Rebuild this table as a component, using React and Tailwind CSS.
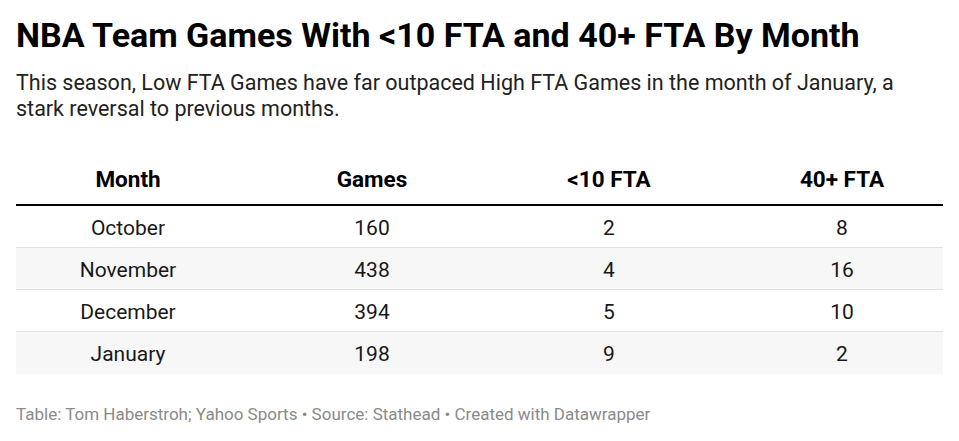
export default function App() {
  const rows = [
    ["October", "160", "2", "8"],
    ["November", "438", "4", "16"],
    ["December", "394", "5", "10"],
    ["January", "198", "9", "2"],
  ];
  const cols = "grid grid-cols-[224px_264px_210px_229px]";
  return (
    <div className="w-[959px] h-[441px] bg-white px-4 pt-4 text-[#181818]" style={{ fontFamily: "Roboto, 'Liberation Sans', sans-serif" }}>
      <h1 className="text-[34px] leading-[38px] font-bold text-black">NBA Team Games With &lt;10 FTA and 40+ FTA By Month</h1>
      <p className="mt-4 text-[21.5px] leading-[26px] text-[#222]">
        This season, Low FTA Games have far outpaced High FTA Games in the month of January, a stark reversal to previous months.
      </p>
      <div className="mt-[30px]">
        <div className={`${cols} h-[54px] items-end pb-[13px] border-b-2 border-black text-[22.5px] leading-[24px] font-bold text-black`}>
          <div className="text-center">Month</div>
          <div className="text-center">Games</div>
          <div className="text-center">&lt;10 FTA</div>
          <div className="text-center pl-[27px]">40+ FTA</div>
        </div>
        {rows.map((r, i) => (
          <div
            key={r[0]}
            className={`${cols} h-[42px] pt-[4px] items-center text-[21px] ${i % 2 === 1 ? "bg-[#f7f7f7]" : "bg-white"} ${i < rows.length - 1 ? "border-b border-[#e2e2e2]" : ""}`}
          >
            <div className="text-center">{r[0]}</div>
            <div className="text-center">{r[1]}</div>
            <div className="text-center">{r[2]}</div>
            <div className="text-center pl-[27px]">{r[3]}</div>
          </div>
        ))}
      </div>
      <p className="mt-[30px] text-[17px] leading-[20px] text-[#8a8a8a]">
        Table: Tom Haberstroh; Yahoo Sports • Source: Stathead • Created with Datawrapper
      </p>
    </div>
  );
}
